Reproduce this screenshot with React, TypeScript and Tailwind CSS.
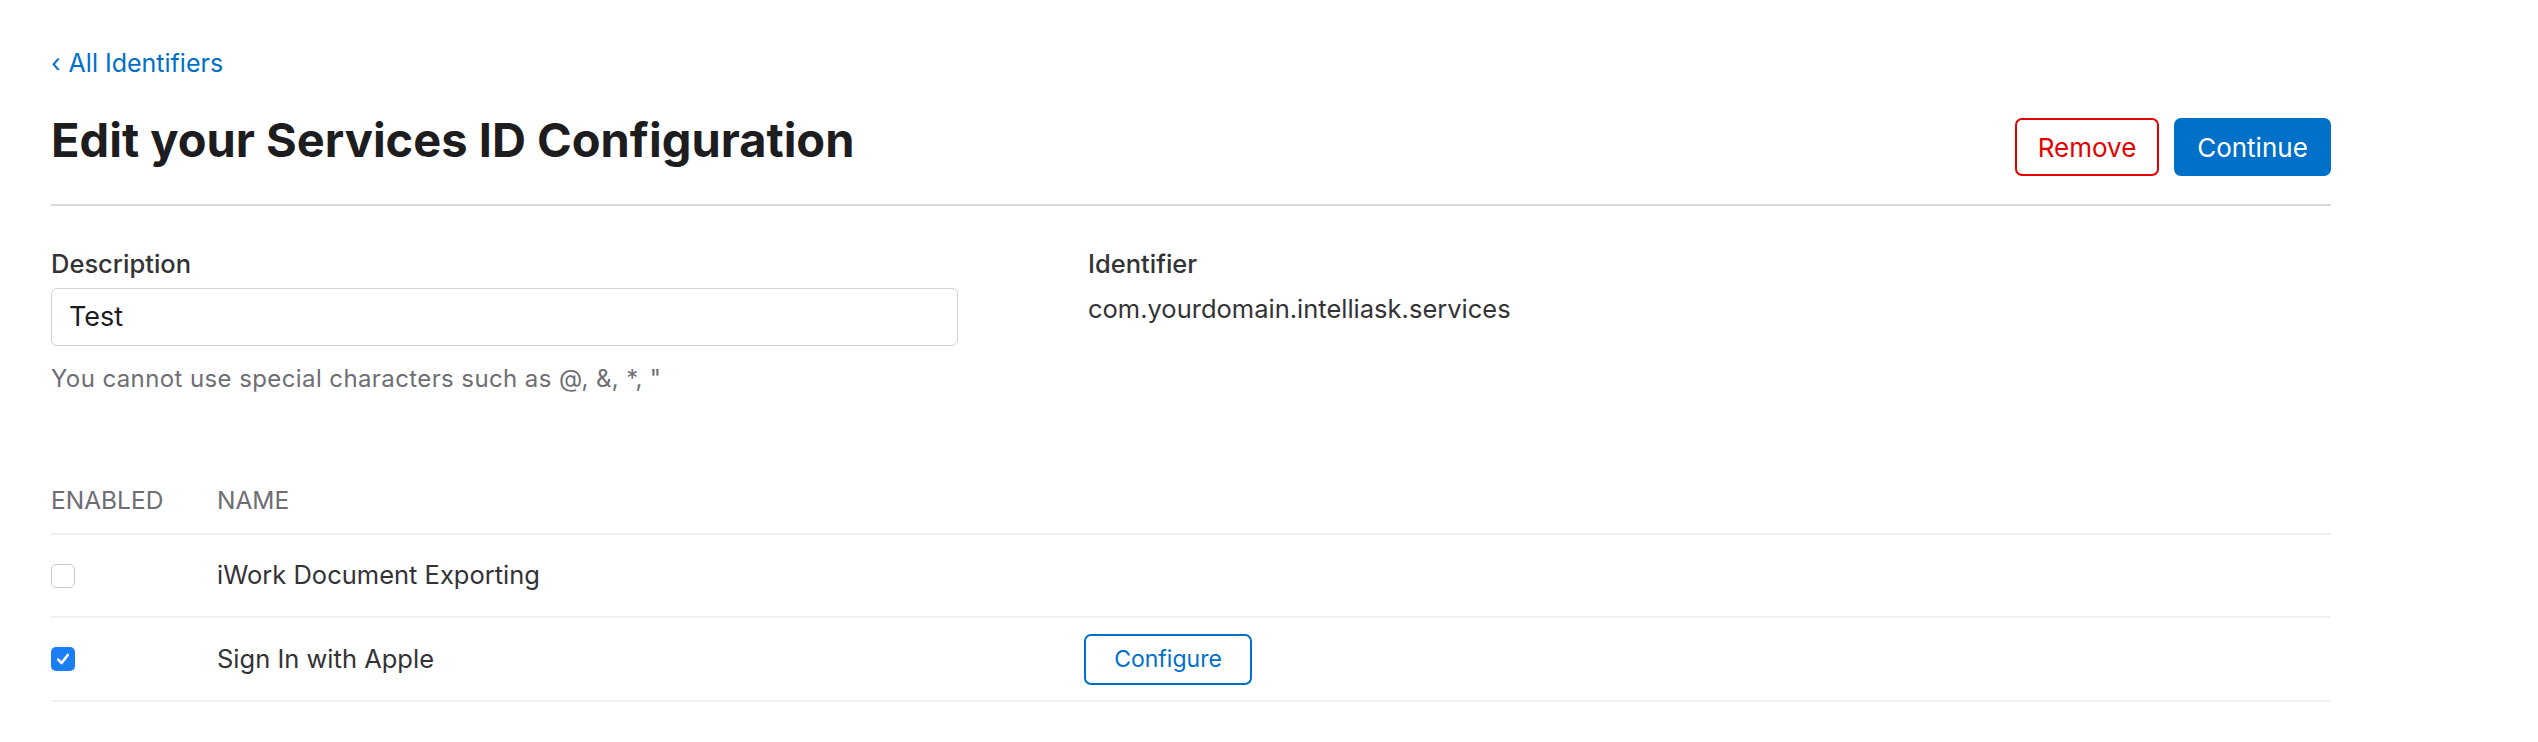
import React from "react";

function Checkbox({ checked }: { checked: boolean }) {
  if (checked) {
    return (
      <div className="w-[24px] h-[24px] rounded-[5px] bg-[#1a7ff5] flex items-center justify-center">
        <svg width="16" height="16" viewBox="0 0 16 16" fill="none">
          <path d="M3.2 8.6 L6.6 12 L12.8 4" stroke="white" strokeWidth="2.6" strokeLinecap="round" strokeLinejoin="round" />
        </svg>
      </div>
    );
  }
  return <div className="w-[24px] h-[24px] rounded-[5px] border-[1.5px] border-[#c9c9cc] bg-white" />;
}

export default function App() {
  return (
    <div className="w-[2538px] h-[742px] bg-white text-[#333336] font-['Inter','Liberation_Sans',sans-serif] overflow-hidden">
      <div className="ml-[51px] w-[2280px] pt-[48px]">
        <a className="block text-[25px] leading-[30px] text-[#0070c9]">
          <span className="mr-[8px]">‹</span>All Identifiers
        </a>

        <div className="mt-[34px] flex justify-between items-start">
          <h1 className="text-[47px] leading-[56px] font-bold text-[#1d1d1f]">
            Edit your Services ID Configuration
          </h1>
          <div className="mt-[6px] flex gap-[15px]">
            <button className="w-[144px] h-[58px] rounded-[7px] border-2 border-[#e30000] bg-white text-[26px] text-[#e30000]">
              Remove
            </button>
            <button className="w-[157px] h-[58px] rounded-[7px] bg-[#0070c9] text-[26px] text-white">
              Continue
            </button>
          </div>
        </div>

        <div className="mt-[28px] h-[2px] bg-[#d9d9dc]" />

        <div className="flex">
          <div className="w-[1037px] pt-[43px]">
            <div className="text-[25.5px] leading-[30px] font-medium text-[#333336]">Description</div>
            <div className="mt-[9px] w-[907px] h-[58px] rounded-[6px] border-[1.5px] border-[#d2d2d7] flex items-center pl-[17px] text-[27px] text-[#1d1d1f]">
              Test
            </div>
            <div className="mt-[19px] text-[24px] leading-[28px] tracking-[0.4px] text-[#6e6e73]">
              You cannot use special characters such as @, &amp;, *, "
            </div>
          </div>
          <div className="pt-[43px]">
            <div className="text-[25.5px] leading-[30px] font-medium text-[#333336]">Identifier</div>
            <div className="mt-[15px] text-[25.5px] leading-[30px] text-[#333336]">
              com.yourdomain.intelliask.services
            </div>
          </div>
        </div>

        <div className="mt-[93px]">
          <div className="flex pb-[19px] border-b-2 border-[#f0f0f2] text-[24.5px] leading-[28px] text-[#6e6e73]">
            <div className="w-[166px]">ENABLED</div>
            <div>NAME</div>
          </div>
          <div className="h-[83px] flex items-center border-b-2 border-[#f0f0f2]">
            <div className="w-[166px]">
              <Checkbox checked={false} />
            </div>
            <div className="w-[867px] text-[25.5px] text-[#333336]">iWork Document Exporting</div>
          </div>
          <div className="h-[84px] flex items-center border-b-2 border-[#f0f0f2]">
            <div className="w-[166px]">
              <Checkbox checked={true} />
            </div>
            <div className="w-[867px] text-[25.5px] text-[#333336]">Sign In with Apple</div>
            <button className="w-[168px] h-[51px] rounded-[7px] border-2 border-[#0070c9] bg-white text-[23px] text-[#0070c9]">
              Configure
            </button>
          </div>
        </div>
      </div>
    </div>
  );
}
